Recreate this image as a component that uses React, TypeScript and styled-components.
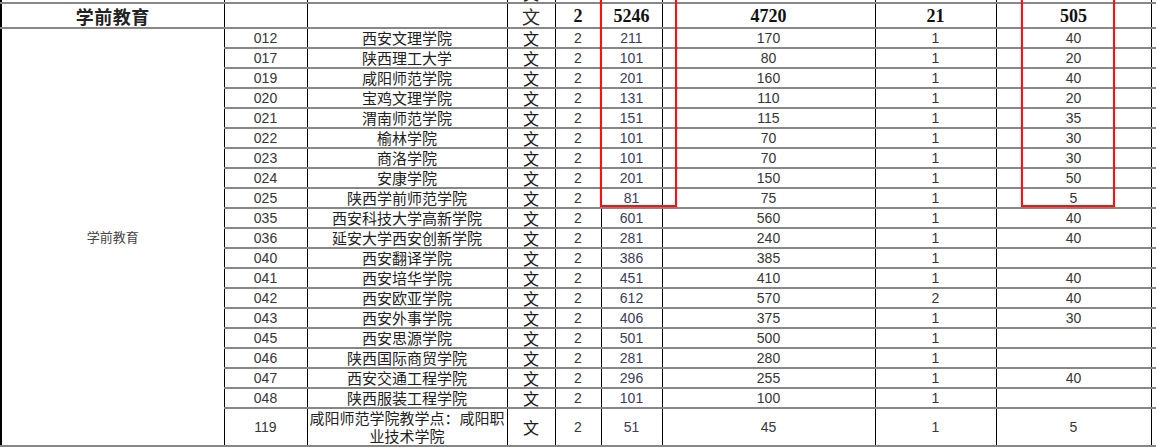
import React from 'react';
import styled, { createGlobalStyle } from 'styled-components';

const GlobalStyle = createGlobalStyle`
  html, body {
    margin: 0;
    padding: 0;
    background: #fff;
  }
  body {
    font-family: 'Liberation Sans', Arial, 'Noto Sans CJK SC', sans-serif;
  }
`;

const Viewport = styled.div`
  position: relative;
  width: 1156px;
  height: 447px;
  overflow: hidden;
`;

const Sheet = styled.table`
  margin-top: -18px;
  border-collapse: collapse;
  table-layout: fixed;
  width: 1170px;
  color: #363636;
`;

const Row = styled.tr<{ $h: number }>`
  height: ${(p) => p.$h}px;
`;

const Cell = styled.td`
  border-left: 1px solid #000;
  border-right: 1px solid #000;
  border-top: 2px solid #878787;
  border-bottom: 2px solid #878787;
  padding: 0;
  text-align: center;
  vertical-align: middle;
  font-size: 14px;
  line-height: 16px;
  white-space: nowrap;
  overflow: hidden;
`;

const FirstCell = styled(Cell)`
  border-left-width: 2px;
`;

const NameCell = styled(Cell)<{ $wrap?: boolean }>`
  font-family: 'Noto Sans CJK SC', sans-serif;
  font-size: 15px;
  line-height: 18px;
  color: #1e1e1e;
  white-space: ${(p) => (p.$wrap ? 'normal' : 'nowrap')};
`;

const WenCell = styled(Cell)`
  font-family: 'Noto Sans CJK SC', sans-serif;
  font-size: 16px;
  line-height: 16px;
  color: #1a1a1a;
`;

const BlueCell = styled(Cell)`
  color: #3c3c58;
`;

const MajorCell = styled(FirstCell)`
  font-family: 'Noto Sans CJK SC', sans-serif;
  font-size: 13px;
  color: #444;
`;

const HeadCell = styled(Cell)`
  font-family: 'Liberation Serif', 'Times New Roman', serif;
  font-weight: bold;
  font-size: 18px;
  color: #111;
`;

const HeadTitle = styled(FirstCell)`
  font-family: 'Noto Sans CJK SC', serif;
  font-weight: bold;
  font-size: 18px;
  letter-spacing: 0.5px;
  color: #222;
`;

const HeadWen = styled(WenCell)`
  font-size: 18px;
  line-height: 18px;
  color: #2a2a2a;
`;

const Highlight = styled.div<{ $left: number; $width: number }>`
  position: absolute;
  top: -4px;
  left: ${(p) => p.$left}px;
  width: ${(p) => p.$width}px;
  height: 211px;
  box-sizing: border-box;
  border: 2px solid #ff1010;
  box-shadow: 0 0 1px rgba(255, 0, 0, 0.5);
  pointer-events: none;
`;

type School = [string, string, string, string, string, string];

const schools: School[] = [
  ['012', '西安文理学院', '211', '170', '1', '40'],
  ['017', '陕西理工大学', '101', '80', '1', '20'],
  ['019', '咸阳师范学院', '201', '160', '1', '40'],
  ['020', '宝鸡文理学院', '131', '110', '1', '20'],
  ['021', '渭南师范学院', '151', '115', '1', '35'],
  ['022', '榆林学院', '101', '70', '1', '30'],
  ['023', '商洛学院', '101', '70', '1', '30'],
  ['024', '安康学院', '201', '150', '1', '50'],
  ['025', '陕西学前师范学院', '81', '75', '1', '5'],
  ['035', '西安科技大学高新学院', '601', '560', '1', '40'],
  ['036', '延安大学西安创新学院', '281', '240', '1', '40'],
  ['040', '西安翻译学院', '386', '385', '1', ''],
  ['041', '西安培华学院', '451', '410', '1', '40'],
  ['042', '西安欧亚学院', '612', '570', '2', '40'],
  ['043', '西安外事学院', '406', '375', '1', '30'],
  ['045', '西安思源学院', '501', '500', '1', ''],
  ['046', '陕西国际商贸学院', '281', '280', '1', ''],
  ['047', '西安交通工程学院', '296', '255', '1', '40'],
  ['048', '陕西服装工程学院', '101', '100', '1', ''],
  ['119', '咸阳师范学院教学点：咸阳职业技术学院', '51', '45', '1', '5'],
];

const widths = [223, 83, 200, 48, 46, 61, 213, 121, 155, 20];

const App = (): JSX.Element => {
  return (
    <Viewport>
      <GlobalStyle />
      <Sheet>
        <colgroup>
          {widths.map((w, i) => (
            <col key={i} style={{ width: w }} />
          ))}
        </colgroup>
        <tbody>
          <Row $h={20}>
            <FirstCell />
            <Cell />
            <NameCell />
            <WenCell>文</WenCell>
            <Cell />
            <BlueCell />
            <Cell />
            <Cell />
            <Cell />
            <Cell />
          </Row>
          <Row $h={25}>
            <HeadTitle>学前教育</HeadTitle>
            <Cell />
            <Cell />
            <HeadWen>文</HeadWen>
            <HeadCell>2</HeadCell>
            <HeadCell>5246</HeadCell>
            <HeadCell>4720</HeadCell>
            <HeadCell>21</HeadCell>
            <HeadCell>505</HeadCell>
            <Cell />
          </Row>
          {schools.map((s, i) => {
            const last = i === schools.length - 1;
            return (
              <Row $h={last ? 37 : 20} key={s[0]}>
                {i === 0 && (
                  <MajorCell rowSpan={schools.length}>学前教育</MajorCell>
                )}
                <Cell>{s[0]}</Cell>
                <NameCell $wrap={last}>{s[1]}</NameCell>
                <WenCell>文</WenCell>
                <Cell>2</Cell>
                <BlueCell>{s[2]}</BlueCell>
                <Cell>{s[3]}</Cell>
                <Cell>{s[4]}</Cell>
                <Cell>{s[5]}</Cell>
                <Cell />
              </Row>
            );
          })}
          <Row $h={20}>
            <FirstCell />
            <Cell />
            <NameCell />
            <WenCell />
            <Cell />
            <BlueCell />
            <Cell />
            <Cell />
            <Cell />
            <Cell />
          </Row>
        </tbody>
      </Sheet>
      <Highlight $left={600} $width={77} />
      <Highlight $left={1021} $width={94} />
    </Viewport>
  );
};

export default App;
